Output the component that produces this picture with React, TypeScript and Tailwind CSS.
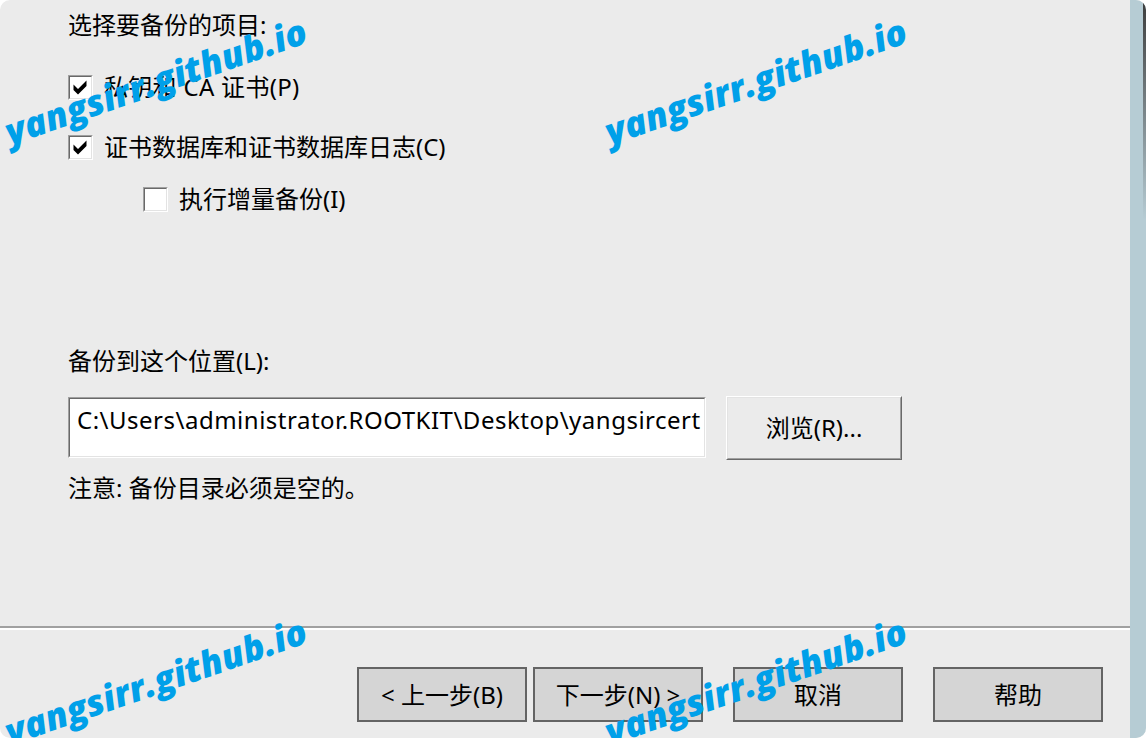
import React from "react";

function CheckBox({ checked }: { checked?: boolean }) {
  return (
    <span className="flex h-[25px] w-[25px] shrink-0 border border-t-[#a0a0a0] border-l-[#a0a0a0] border-b-white border-r-white">
      <span className="flex flex-1 items-center justify-center border border-t-[#696969] border-l-[#696969] border-b-[#e3e3e3] border-r-[#e3e3e3] bg-white">
        {checked && (
          <svg width="21" height="21" viewBox="0 0 21 21">
            <path d="M3.5 7.5 L8 12 L16.5 3.5 L16.5 9 L8 17.5 L3.5 13 Z" fill="#000" />
          </svg>
        )}
      </span>
    </span>
  );
}

function WizardButton({ label }: { label: string }) {
  return (
    <div className="flex h-[55px] w-[170px] items-center justify-center border-2 border-[#646464] bg-[#d5d5d5]">
      {label}
    </div>
  );
}

function Watermark({ className }: { className: string }) {
  return (
    <span
      className={`pointer-events-none absolute origin-bottom-left rotate-[-19deg] whitespace-nowrap font-['Open_Sans',sans-serif] text-[36px] font-extrabold italic leading-none text-[#00a0e9] ${className}`}
    >
      yangsirr.github.io
    </span>
  );
}

export default function App() {
  return (
    <div className="h-[738px] w-[1146px] bg-white">
      <div className="relative flex h-full w-full overflow-hidden rounded-[10px] bg-[#ebebeb] font-['Noto_Sans','Noto_Sans_CJK_SC',sans-serif] text-[24px] text-black">
        <div className="flex flex-1 flex-col">
          {/* options */}
          <div className="h-[626px] pl-[68px] pt-[9px]">
            <div className="h-8 leading-8">选择要备份的项目:</div>

            <div className="mt-[30px] flex h-8 items-center gap-[11px]">
              <CheckBox checked />
              <span className="leading-8 tracking-[0.3px]">私钥和 CA 证书(P)</span>
            </div>
            <div className="mt-[28px] flex h-8 items-center gap-[11px]">
              <CheckBox checked />
              <span className="leading-8">证书数据库和证书数据库日志(C)</span>
            </div>
            <div className="mt-[20px] flex h-8 items-center gap-[11px] pl-[75px]">
              <CheckBox />
              <span className="leading-8">执行增量备份(I)</span>
            </div>

            <div className="mt-[130px] h-8 leading-8">备份到这个位置(L):</div>

            <div className="mt-[20px] flex h-[61px] items-start">
              <div className="flex h-[61px] w-[638px] border border-t-[#a0a0a0] border-l-[#a0a0a0] border-b-white border-r-white">
                <div className="flex-1 overflow-hidden whitespace-nowrap border border-t-[#696969] border-l-[#696969] border-b-[#e3e3e3] border-r-[#e3e3e3] bg-white pl-[7px] pt-[5px] leading-8 tracking-[0.5px]">
                  C:\Users\administrator.ROOTKIT\Desktop\yangsircert
                </div>
              </div>
              <div className="ml-[20px] -mt-px flex h-[64px] w-[176px] border border-t-white border-l-white border-b-[#696969] border-r-[#696969]">
                <div className="flex flex-1 items-center justify-center border border-t-[#e3e3e3] border-l-[#e3e3e3] border-b-[#a0a0a0] border-r-[#a0a0a0]">
                  浏览(R)...
                </div>
              </div>
            </div>

            <div className="mt-[14px] h-8 leading-8">注意: 备份目录必须是空的。</div>
          </div>

          {/* separator */}
          <div className="h-[2px] bg-[#a0a0a0]" />
          <div className="h-[2px] bg-white" />

          {/* wizard buttons */}
          <div className="flex justify-end pr-[27px] pt-[37px]">
            <WizardButton label="< 上一步(B)" />
            <div className="ml-[6px]">
              <WizardButton label="下一步(N) >" />
            </div>
            <div className="ml-[30px]">
              <WizardButton label="取消" />
            </div>
            <div className="ml-[30px]">
              <WizardButton label="帮助" />
            </div>
          </div>
        </div>

        {/* window edge */}
        <div className="relative w-[16px] bg-[#b6ccd4]">
          <div className="absolute right-0 top-0 h-[220px] w-[3px] bg-gradient-to-b from-[#3c3c3c] to-transparent" />
        </div>

        <Watermark className="left-[12px] top-[114px]" />
        <Watermark className="left-[612px] top-[114px]" />
        <Watermark className="left-[12px] top-[714px]" />
        <Watermark className="left-[612px] top-[714px]" />
      </div>
    </div>
  );
}
